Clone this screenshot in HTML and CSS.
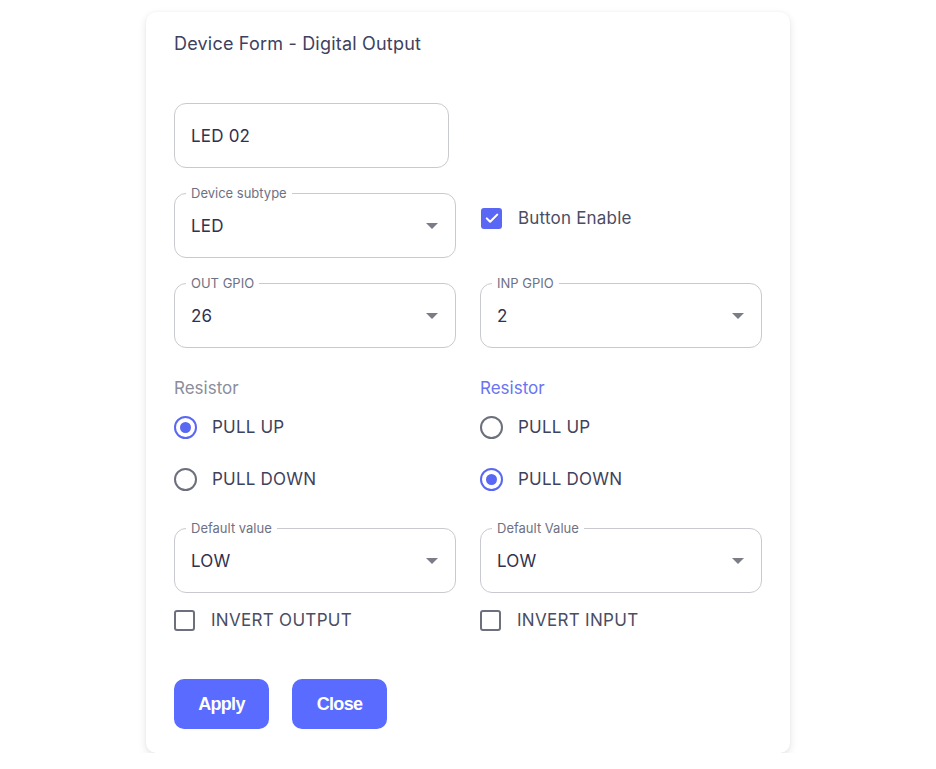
FILE: index.html
```html
<!DOCTYPE html>
<html>
<head>
<meta charset="utf-8">
<link rel="stylesheet" href="styles.css">
</head>
<body>
<div class="card">
  <h1 class="title">Device Form - Digital Output</h1>

  <div class="row row-first">
    <div class="field field-text"><span class="value">LED 02</span></div>
  </div>

  <div class="row">
    <div class="field">
      <span class="legend">Device subtype</span>
      <span class="value">LED</span>
      <span class="arrow"></span>
    </div>
    <label class="check check-top">
      <span class="box box-on"><svg viewBox="0 0 24 24" width="18" height="18"><path d="M5 12.5l4.5 4.5L19 7.5" fill="none" stroke="#fff" stroke-width="2.8" stroke-linecap="round" stroke-linejoin="round"/></svg></span>
      <span class="check-text">Button Enable</span>
    </label>
  </div>

  <div class="row">
    <div class="field">
      <span class="legend">OUT GPIO</span>
      <span class="value">26</span>
      <span class="arrow"></span>
    </div>
    <div class="field">
      <span class="legend">INP GPIO</span>
      <span class="value">2</span>
      <span class="arrow"></span>
    </div>
  </div>

  <div class="row row-radios">
    <div class="radio-group">
      <div class="group-label">Resistor</div>
      <div class="radio"><span class="dot dot-on"></span><span class="radio-text">PULL UP</span></div>
      <div class="radio"><span class="dot"></span><span class="radio-text">PULL DOWN</span></div>
    </div>
    <div class="radio-group">
      <div class="group-label group-label-active">Resistor</div>
      <div class="radio"><span class="dot"></span><span class="radio-text">PULL UP</span></div>
      <div class="radio"><span class="dot dot-on"></span><span class="radio-text">PULL DOWN</span></div>
    </div>
  </div>

  <div class="row row-default">
    <div class="field">
      <span class="legend">Default value</span>
      <span class="value">LOW</span>
      <span class="arrow"></span>
    </div>
    <div class="field">
      <span class="legend">Default Value</span>
      <span class="value">LOW</span>
      <span class="arrow"></span>
    </div>
  </div>

  <div class="row row-invert">
    <label class="check check-small">
      <span class="box box-off"></span>
      <span class="check-text caps">INVERT OUTPUT</span>
    </label>
    <label class="check check-small">
      <span class="box box-off"></span>
      <span class="check-text caps">INVERT INPUT</span>
    </label>
  </div>

  <div class="actions">
    <button class="btn">Apply</button>
    <button class="btn">Close</button>
  </div>
</div>
</body>
</html>
```
FILE: styles.css
```css
html, body {
  margin: 0;
  padding: 0;
  background: #ffffff;
}

body {
  font-family: Inter, "Noto Sans", sans-serif;
  color: #3a3d58;
}

.card {
  box-sizing: border-box;
  width: 644px;
  height: 741px;
  margin: 12px auto 0;
  padding: 20px 28px 0 28px;
  background: #fff;
  border-radius: 10px;
  box-shadow: 0 3px 8px rgba(0, 0, 0, 0.11), 0 0 2px rgba(0, 0, 0, 0.05);
}

.title {
  margin: 0;
  font-size: 18px;
  font-weight: 400;
  line-height: 24px;
  color: #3e4160;
  letter-spacing: 0.2px;
}

.row {
  display: grid;
  grid-template-columns: 282px 282px;
  column-gap: 24px;
  margin-top: 25px;
  align-items: center;
}

.row-first {
  margin-top: 47px;
}

.field {
  position: relative;
  box-sizing: border-box;
  height: 65px;
  border: 1px solid #c9cad0;
  border-radius: 12px;
  display: flex;
  align-items: center;
  padding: 0 16px;
}

.field-text {
  width: 275px;
}

.value {
  font-size: 17px;
  line-height: 22px;
  color: #2f3250;
  letter-spacing: 0.2px;
}

.legend {
  position: absolute;
  top: -10px;
  left: 11px;
  padding: 0 5px;
  background: #fff;
  font-size: 13px;
  line-height: 18px;
  color: #6e7183;
}

.arrow {
  position: absolute;
  right: 17px;
  top: 50%;
  margin-top: -3px;
  width: 0;
  height: 0;
  border-left: 6px solid transparent;
  border-right: 6px solid transparent;
  border-top: 6px solid #7b7d86;
}

.check {
  display: flex;
  align-items: center;
  height: 30px;
}

.check-top {
  align-self: start;
  margin-top: 10px;
  margin-left: 1px;
}

.box {
  box-sizing: border-box;
  width: 21px;
  height: 21px;
  border-radius: 3px;
  display: flex;
  align-items: center;
  justify-content: center;
}

.box-on {
  background: #5a66f4;
}

.box-off {
  width: 21px;
  height: 21px;
  border: 2px solid #6c6f7c;
}

.check-text {
  margin-left: 16px;
  font-size: 17px;
  line-height: 22px;
  color: #4a4d64;
  letter-spacing: 0.2px;
}

.check-small .check-text {
  margin-left: 16px;
}

.caps {
  letter-spacing: 0.3px;
}

.row-radios {
  margin-top: 30px;
  align-items: start;
}

.radio-group {
  display: flex;
  flex-direction: column;
}

.group-label {
  font-size: 17px;
  line-height: 20px;
  color: #8b8e9b;
  margin-bottom: 8px;
}

.group-label-active {
  color: #6a74f2;
}

.radio {
  display: flex;
  align-items: center;
  height: 42px;
  margin-bottom: 10px;
}

.radio:last-child {
  margin-bottom: 0;
}

.dot {
  box-sizing: border-box;
  width: 23px;
  height: 23px;
  border-radius: 50%;
  border: 2px solid #6c6f7c;
  display: flex;
  align-items: center;
  justify-content: center;
}

.dot-on {
  border-color: #5a66f4;
}

.dot-on::after {
  content: "";
  width: 11px;
  height: 11px;
  border-radius: 50%;
  background: #5a66f4;
}

.radio-text {
  margin-left: 15px;
  font-size: 17px;
  line-height: 22px;
  color: #3f425c;
  letter-spacing: 0.2px;
}

.row-default {
  margin-top: 28px;
}

.row-invert {
  margin-top: 12px;
}

.actions {
  display: flex;
  gap: 23px;
  margin-top: 44px;
}

.btn {
  width: 95px;
  height: 50px;
  border: none;
  border-radius: 10px;
  background: #5a6bff;
  color: #fff;
  font-family: "Liberation Sans", Arial, sans-serif;
  font-weight: 700;
  font-size: 18px;
  letter-spacing: -0.7px;
  padding: 0;
}
```
